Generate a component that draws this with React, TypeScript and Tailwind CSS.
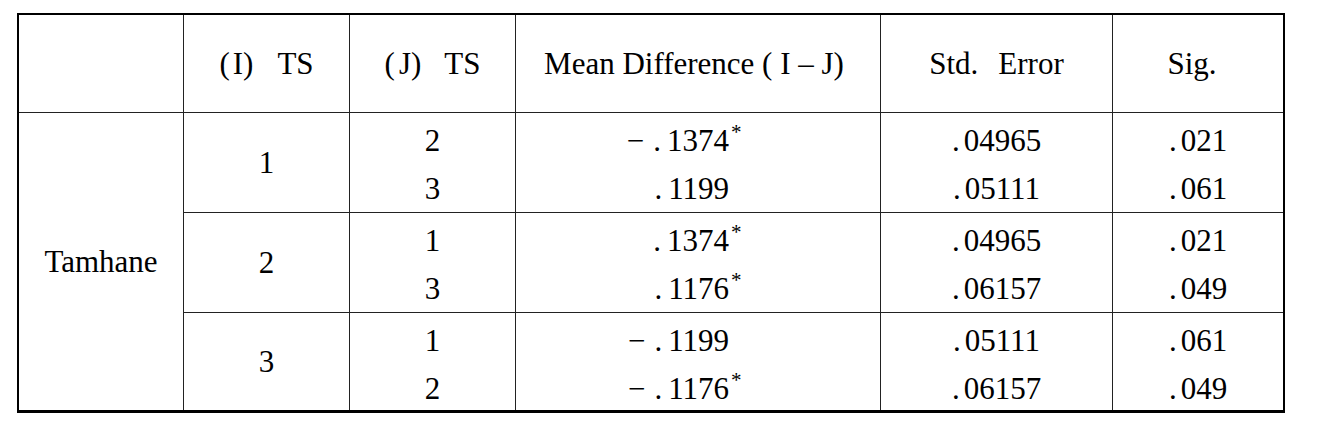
import React from 'react';

interface Row {
  j: string;
  neg: boolean;
  diff: string;
  star: boolean;
  err: string;
  sig: string;
}

interface Group {
  i: string;
  rows: Row[];
}

const groups: Group[] = [
  {
    i: '1',
    rows: [
      { j: '2', neg: true, diff: '1374', star: true, err: '04965', sig: '021' },
      { j: '3', neg: false, diff: '1199', star: false, err: '05111', sig: '061' },
    ],
  },
  {
    i: '2',
    rows: [
      { j: '1', neg: false, diff: '1374', star: true, err: '04965', sig: '021' },
      { j: '3', neg: false, diff: '1176', star: true, err: '06157', sig: '049' },
    ],
  },
  {
    i: '3',
    rows: [
      { j: '1', neg: true, diff: '1199', star: false, err: '05111', sig: '061' },
      { j: '2', neg: true, diff: '1176', star: true, err: '06157', sig: '049' },
    ],
  },
];

// numbers in the source are typeset as ". 1374" with a small gap after the dot
function Num({ neg, digits, gap = 'mr-[4px]' }: { neg?: boolean; digits: string; gap?: string }) {
  return (
    <>
      {neg && <span className="mr-[9px]">−</span>}
      <span className={gap}>.</span>
      {digits}
    </>
  );
}

export default function App() {
  return (
    <div className="bg-white w-[1317px] h-[430px] pt-[13px] pl-[17px] text-black text-[31px] leading-none font-['Liberation_Serif','Times_New_Roman',serif]">
      <div className="grid grid-cols-[165px_166px_166px_365px_232px_170px] w-[1268px] border-2 border-b-[3px] border-black">
        {/* header */}
        <div className="h-[98px] border-r border-b border-[#222]" />
        <div className="h-[98px] border-r border-b border-[#222] flex items-center justify-center">
          (<span className="ml-[3px]">I)</span>
          <span className="ml-[24px]">TS</span>
        </div>
        <div className="h-[98px] border-r border-b border-[#222] flex items-center justify-center">
          (<span className="ml-[4px]">J)</span>
          <span className="ml-[23px]">TS</span>
        </div>
        <div className="h-[98px] border-r border-b border-[#222] flex items-center justify-center pr-[8px]">
          Mean Difference ( I – J)
        </div>
        <div className="h-[98px] border-r border-b border-[#222] flex items-center justify-center">
          Std.<span className="ml-[20px]">Error</span>
        </div>
        <div className="h-[98px] border-b border-[#222] flex items-center justify-center pr-[12px]">
          Sig.
        </div>

        {/* body */}
        <div className="row-span-3 border-r border-[#222] flex items-center justify-center">
          Tamhane
        </div>
        {groups.map((g, gi) => {
          const last = gi === groups.length - 1;
          const cell = last
            ? 'h-[97px] border-[#222]'
            : 'h-[100px] border-b border-[#222]';
          return (
            <React.Fragment key={g.i}>
              <div className={`${cell} border-r flex items-center justify-center`}>{g.i}</div>
              <div className={`${cell} border-r flex flex-col pt-[3px]`}>
                {g.rows.map((r) => (
                  <div key={r.j} className="h-[48px] shrink-0 flex items-center justify-center">
                    {r.j}
                  </div>
                ))}
              </div>
              <div className={`${cell} border-r flex flex-col pt-[3px]`}>
                {g.rows.map((r) => (
                  <div key={r.j} className="h-[48px] shrink-0 flex items-center justify-end pr-[151px]">
                    <span className="relative">
                      <Num neg={r.neg} digits={r.diff} gap="mr-[6px]" />
                      {r.star && (
                        <span className="absolute left-full top-[-3px] ml-[2px] text-[21px] leading-none">*</span>
                      )}
                    </span>
                  </div>
                ))}
              </div>
              <div className={`${cell} border-r flex flex-col pt-[3px]`}>
                {g.rows.map((r) => (
                  <div key={r.j} className="h-[48px] shrink-0 flex items-center justify-center">
                    <Num digits={r.err} />
                  </div>
                ))}
              </div>
              <div className={`${cell} flex flex-col pt-[3px]`}>
                {g.rows.map((r) => (
                  <div key={r.j} className="h-[48px] shrink-0 flex items-center justify-center">
                    <Num digits={r.sig} />
                  </div>
                ))}
              </div>
            </React.Fragment>
          );
        })}
      </div>
    </div>
  );
}
